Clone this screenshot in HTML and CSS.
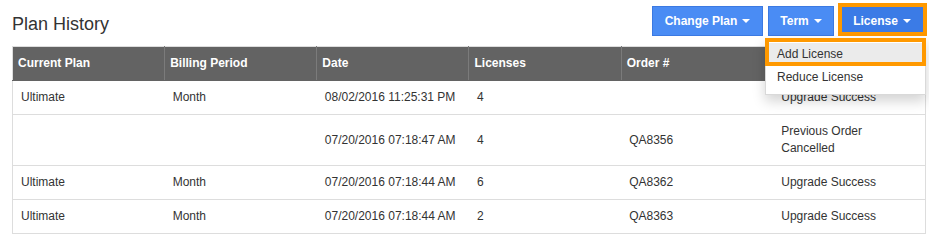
FILE: index.html
```html
<!DOCTYPE html>
<html>
<head>
<meta charset="utf-8">
<link rel="stylesheet" href="styles.css">
</head>
<body>
<div class="page">
  <div class="toolbar">
    <h1 class="title">Plan History</h1>
    <div class="actions">
      <button class="btn btn-plan">Change Plan <span class="caret"></span></button>
      <button class="btn btn-term">Term <span class="caret"></span></button>
      <div class="dropdown">
        <button class="btn active">License <span class="caret"></span></button>
        <ul class="menu">
          <li class="item hover">Add License</li>
          <li class="item">Reduce License</li>
        </ul>
      </div>
    </div>
  </div>
  <table class="grid">
    <thead>
      <tr>
        <th>Current Plan</th>
        <th>Billing Period</th>
        <th>Date</th>
        <th>Licenses</th>
        <th>Order #</th>
        <th></th>
      </tr>
    </thead>
    <tbody>
      <tr>
        <td>Ultimate</td>
        <td>Month</td>
        <td>08/02/2016 11:25:31 PM</td>
        <td>4</td>
        <td></td>
        <td>Upgrade Success</td>
      </tr>
      <tr>
        <td></td>
        <td></td>
        <td>07/20/2016 07:18:47 AM</td>
        <td>4</td>
        <td>QA8356</td>
        <td>Previous Order Cancelled</td>
      </tr>
      <tr>
        <td>Ultimate</td>
        <td>Month</td>
        <td>07/20/2016 07:18:44 AM</td>
        <td>6</td>
        <td>QA8362</td>
        <td>Upgrade Success</td>
      </tr>
      <tr>
        <td>Ultimate</td>
        <td>Month</td>
        <td>07/20/2016 07:18:44 AM</td>
        <td>2</td>
        <td>QA8363</td>
        <td>Upgrade Success</td>
      </tr>
    </tbody>
  </table>
</div>
</body>
</html>
```
FILE: styles.css
```css
html, body {
  margin: 0;
  padding: 0;
  background: #fff;
}
body {
  font-family: "Liberation Sans", Arial, sans-serif;
  font-size: 12px;
  color: #333;
  overflow: hidden;
}
.page {
  padding: 6px 3px 0 12px;
  width: 914px;
}
.toolbar {
  display: flex;
  justify-content: space-between;
  align-items: flex-start;
  height: 30px;
}
.title {
  margin: 8px 0 0 0;
  font-size: 18px;
  line-height: 20px;
  font-weight: normal;
  color: #333;
}
.actions {
  display: flex;
}
.btn {
  font-family: "Liberation Sans", Arial, sans-serif;
  font-size: 12px;
  font-weight: bold;
  color: #fff;
  background: #4a8cf4;
  border: 1px solid #3b79e2;
  border-radius: 0;
  height: 30px;
  padding: 0;
  display: flex;
  align-items: center;
  justify-content: center;
  gap: 5px;
  cursor: pointer;
}
.btn-plan {
  width: 111px;
  margin-right: 5px;
}
.btn-term {
  width: 66px;
  margin-right: 4px;
}
.btn.active {
  background: #3b7be6;
  border-color: #3069d0;
  width: 88px;
  position: relative;
}
.btn.active::after {
  content: "";
  position: absolute;
  top: -4px;
  left: -1px;
  right: -2px;
  bottom: -1px;
  border: 4px solid #ff9900;
}
.caret {
  display: inline-block;
  width: 0;
  height: 0;
  border-top: 4px solid #fff;
  border-left: 4px solid transparent;
  border-right: 4px solid transparent;
}
.dropdown {
  position: relative;
}
.menu {
  position: absolute;
  top: 100%;
  right: 0;
  margin: 2px 0 0 0;
  min-width: 159px;
  padding: 4px 0 5px;
  list-style: none;
  background: #fff;
  border: 1px solid rgba(0, 0, 0, 0.15);
  box-shadow: 0 6px 12px rgba(0, 0, 0, 0.175);
  z-index: 10;
}
.item {
  position: relative;
  padding: 3px 11px;
  line-height: 17px;
  color: #333;
  white-space: nowrap;
}
.item.hover {
  background: #ebebeb;
}
.item.hover::after {
  content: "";
  position: absolute;
  top: -5px;
  left: -1px;
  right: -1px;
  bottom: 0;
  border: 4px solid #ff9900;
}
.grid {
  margin-top: 10px;
  width: 914px;
  table-layout: fixed;
  border-collapse: collapse;
  border: 1px solid #ddd;
}
.grid th {
  background: #636363;
  color: #fff;
  font-weight: bold;
  text-align: left;
  padding: 8px 5px;
  line-height: 17px;
  border-left: 1px solid #7b7b7b;
  border-bottom: 1px solid #636363;
}
.grid th:first-child {
  border-left: 1px solid #ddd;
}
.grid td {
  padding: 8px;
  line-height: 17px;
  vertical-align: middle;
  border-top: 1px solid #ddd;
}
```
